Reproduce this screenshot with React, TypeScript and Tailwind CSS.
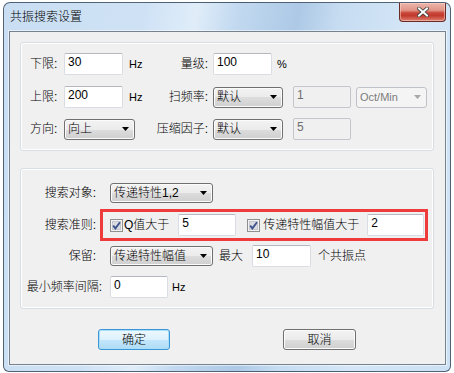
import React from "react";

function Arrow({ color = "#000" }: { color?: string }) {
  return (
    <svg width="7" height="4" viewBox="0 0 7 4" className="shrink-0">
      <path d="M0 0H7L3.5 4Z" fill={color} />
    </svg>
  );
}

function Select({
  w,
  text,
  disabled = false,
  h = "h-[21px]",
}: {
  w: string;
  text: string;
  disabled?: boolean;
  h?: string;
}) {
  return (
    <div
      className={`${w} ${h} shrink-0 flex items-center justify-between pl-[3px] pr-[5px] rounded-[3px] border ${
        disabled
          ? "border-[#bfc3c7] bg-[#f4f4f4] text-[#7c7c7c]"
          : "border-[#707070] bg-[linear-gradient(#f3f3f3,#ebebeb_50%,#dddddd_50%,#cfcfcf)] shadow-[inset_0_0_0_1px_#fbfbfb]"
      }`}
    >
      <span className={`${disabled ? "text-[11px]" : "text-[12px]"} leading-[14px] whitespace-nowrap`}>{text}</span>
      <Arrow color={disabled ? "#a8a8a8" : "#000"} />
    </div>
  );
}

function Field({
  w,
  value,
  disabled = false,
}: {
  w: string;
  value: string;
  disabled?: boolean;
}) {
  return (
    <div
      className={`${w} h-[22px] shrink-0 border rounded-[2px] pl-[3px] text-[12px] leading-[16px] ${
        disabled
          ? "border-[#c3c7cb] bg-[#f0f0f0] text-[#6d6d6d]"
          : "border-[#d9dce2] border-t-[#b4b7bf] bg-white text-black"
      }`}
    >
      {value}
    </div>
  );
}

function Check() {
  return (
    <svg width="13" height="13" viewBox="0 0 13 13" className="shrink-0">
      <rect x="0.5" y="0.5" width="12" height="12" fill="#f2f2f2" stroke="#8e8f8f" />
      <rect x="2.5" y="2.5" width="8" height="8" fill="#d9dbe0" stroke="#c4c7cd" />
      <path d="M3.2 6.6 L5.4 9.4 L10 3.2" fill="none" stroke="#3d518c" strokeWidth="1.8" />
    </svg>
  );
}

function Btn({ text, w, primary = false }: { text: string; w: string; primary?: boolean }) {
  return (
    <div
      className={`${w} h-[21px] shrink-0 flex items-center justify-center rounded-[3px] border text-[12px] leading-[14px] text-black ${
        primary
          ? "border-[#3c95d6] bg-[linear-gradient(#eef8fe,#dcf1fc_50%,#c4e7fb_50%,#aedcf5)] shadow-[inset_0_0_0_1px_#a8e0fa]"
          : "border-[#707070] bg-[linear-gradient(#f3f3f3,#ebebeb_50%,#dddddd_50%,#cfcfcf)] shadow-[inset_0_0_0_1px_#fbfbfb]"
      }`}
    >
      {text}
    </div>
  );
}

export default function App() {
  return (
    <div className="w-[454px] h-[373px] bg-white pt-[2px] pl-[3px] font-['Liberation_Sans','Noto_Sans_CJK_SC',sans-serif] font-light text-[12px] leading-[14px] text-black">
      <div className="w-[448px] h-[370px] flex flex-col rounded-t-[7px] rounded-b-[6px] border border-[rgba(40,55,75,0.75)] bg-[linear-gradient(100deg,#c9def3_0%,#cfe2f5_28%,#e0edf9_38%,#c2d9f0_46%,#adc9e6_58%,#c6dcf1_66%,#d4e6f7_80%,#cde1f4_100%)]">
        <div className="h-[28px] flex items-start">
          <span className="ml-[6px] mt-[7px] text-[12px] leading-[14px] text-black">共振搜索设置</span>
          <div className="ml-auto mr-[4px] w-[47px] h-[19px] flex items-center justify-center rounded-b-[4px] border border-t-0 border-[#6b2a26] bg-[linear-gradient(#ebb5ab,#e19688_40%,#c9463a_55%,#c23a2c_70%,#dc8070)] shadow-[inset_0_0_0_1px_rgba(255,220,210,0.5)]">
            <svg width="12" height="10" viewBox="0 0 12 10">
              <path d="M2 1.5 L10 8.5 M10 1.5 L2 8.5" stroke="#3b3b3b" strokeWidth="3.6" strokeLinecap="square" />
              <path d="M2 1.5 L10 8.5 M10 1.5 L2 8.5" stroke="#ffffff" strokeWidth="2" strokeLinecap="square" />
            </svg>
          </div>
        </div>
        <div className="ml-[5px] mr-[4px] mb-[6px] flex-1 flex flex-col border border-[#77828f] bg-[#f0f0f0] shadow-[0_0_0_1px_rgba(255,255,255,0.55)]">
          {/* group 1 */}
          <div className="ml-[10px] mt-[10px] w-[414px] rounded-[3px] border border-[#d5dfe5] shadow-[inset_0_0_0_1px_#ffffff] pt-[10px] pb-[10px] pl-[9px]">
            <div className="flex h-[22px] items-center">
              <div className="flex w-[178px] items-center">
                <span className="w-[34px]">下限:</span>
                <Field w="w-[59px]" value="30" />
                <span className="ml-[6px] text-[11px]">Hz</span>
                <span className="ml-auto">量级:</span>
              </div>
              <div className="ml-[5px] flex items-center">
                <Field w="w-[59px]" value="100" />
                <span className="ml-[5px] text-[11px]">%</span>
              </div>
            </div>
            <div className="mt-[11px] flex h-[22px] items-center">
              <div className="flex w-[178px] items-center">
                <span className="w-[34px]">上限:</span>
                <Field w="w-[59px]" value="200" />
                <span className="ml-[6px] text-[11px]">Hz</span>
                <span className="ml-auto">扫频率:</span>
              </div>
              <div className="ml-[5px] flex items-center">
                <Select w="w-[70px]" text="默认" />
                <div className="ml-[10px]">
                  <Field w="w-[58px]" value="1" disabled />
                </div>
                <div className="ml-[5px]">
                  <Select w="w-[71px]" text="Oct/Min" disabled />
                </div>
              </div>
            </div>
            <div className="mt-[10px] flex h-[22px] items-center">
              <div className="flex w-[178px] items-center">
                <span className="w-[34px]">方向:</span>
                <Select w="w-[71px]" text="向上" />
                <span className="ml-auto">压缩因子:</span>
              </div>
              <div className="ml-[5px] flex items-center">
                <Select w="w-[70px]" text="默认" />
                <div className="ml-[10px]">
                  <Field w="w-[58px]" value="5" disabled />
                </div>
              </div>
            </div>
          </div>

          {/* group 2 */}
          <div className="ml-[10px] mt-[17px] w-[414px] rounded-[3px] border border-[#d5dfe5] shadow-[inset_0_0_0_1px_#ffffff] pt-[14px] pb-[10px]">
            <div className="flex h-[20px] items-center">
              <span className="w-[89px] shrink-0 pr-[14px] text-right">搜索对象:</span>
              <Select w="w-[103px]" text="传递特性1,2" h="h-[20px]" />
            </div>
            <div className="mt-[6px] flex h-[32px] items-center">
              <span className="w-[79px] shrink-0 pr-[4px] text-right">搜索准则:</span>
              <div className="w-[328px] h-[32px] border-[3px] border-[#ee3b3b] flex items-center pl-[7px]">
                <Check />
                <span className="ml-[1px]">Q值大于</span>
                <div className="ml-[9px]">
                  <Field w="w-[58px]" value="5" />
                </div>
                <div className="ml-[11px] flex items-center">
                  <Check />
                </div>
                <span className="ml-[3px]">传递特性幅值大于</span>
                <div className="ml-[8px]">
                  <Field w="w-[57px]" value="2" />
                </div>
              </div>
            </div>
            <div className="mt-[4px] flex h-[22px] items-center">
              <span className="w-[89px] shrink-0 pr-[14px] text-right">保留:</span>
              <Select w="w-[103px]" text="传递特性幅值" h="h-[20px]" />
              <span className="ml-[6px]">最大</span>
              <div className="ml-[9px]">
                <Field w="w-[59px]" value="10" />
              </div>
              <span className="ml-[7px]">个共振点</span>
            </div>
            <div className="mt-[9px] flex h-[22px] items-center">
              <span className="w-[89px] shrink-0 pr-[8px] text-right whitespace-nowrap">最小频率间隔:</span>
              <Field w="w-[58px]" value="0" />
              <span className="ml-[4px] text-[11px]">Hz</span>
            </div>
          </div>

          <div className="mt-[20px] flex pl-[88px]">
            <Btn text="确定" w="w-[72px]" primary />
            <div className="ml-[113px]">
              <Btn text="取消" w="w-[73px]" />
            </div>
          </div>
        </div>
      </div>
    </div>
  );
}
